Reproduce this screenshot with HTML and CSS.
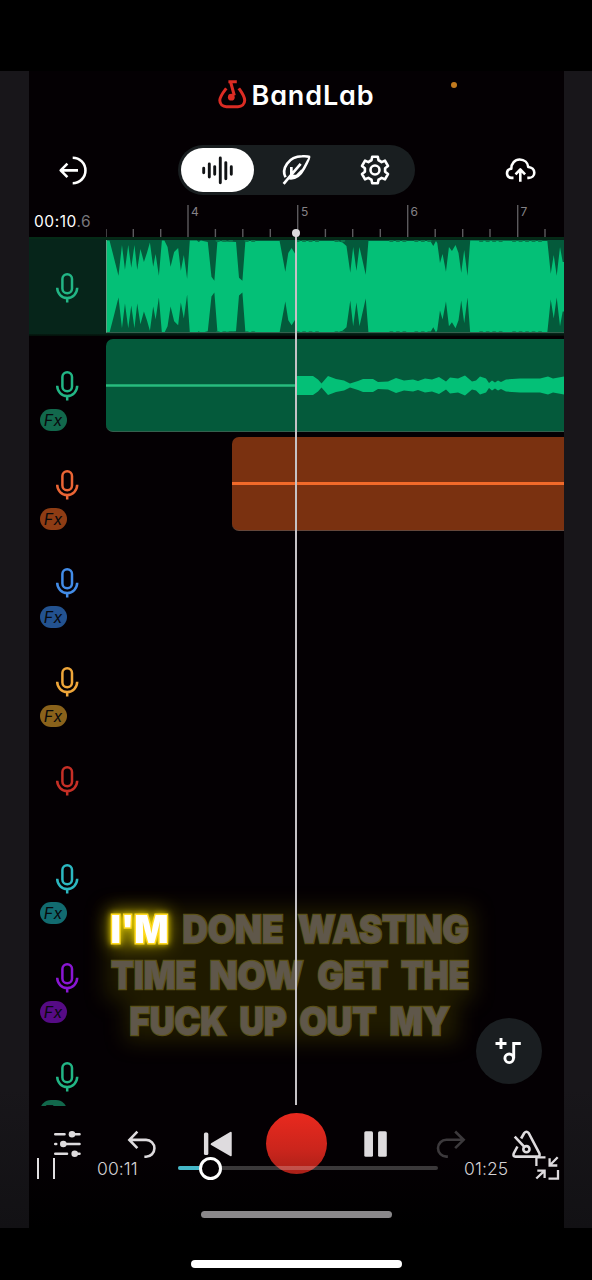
FILE: index.html
```html
<!DOCTYPE html>
<html lang="en">
<head>
<meta charset="utf-8">
<title>BandLab</title>
<link rel="stylesheet" href="styles.css">
</head>
<body>
<svg class="defs" aria-hidden="true">
  <symbol id="mic" viewBox="55 271 24 32">
    <rect x="62.4" y="273.2" width="9.6" height="19" rx="4.8"/>
    <path d="M57.2 286.8A10 10.2 0 0 0 77.2 286.8M67.2 297V301.6"/>
  </symbol>
</svg>
<div class="stage">
  <main class="app">
    <header class="brand">
      <svg class="logo" viewBox="217 78 31 31">
        <path d="M226.3 88.300C223.500 92 219.800 96.300 219.800 100.300C219.800 104.200 222.600 106.700 226.400 106.700H238C241.800 106.700 244.700 104.200 244.700 100.300C244.700 96.300 241.400 92 238.800 88.300"/>
        <path d="M228.400 81.700H236.800M230.600 82L234.300 95.500"/>
        <circle class="logo-head" cx="231.300" cy="97.200" r="3.400"/>
      </svg>
      <span class="wordmark">BandLab</span>
      <i class="mic-dot"></i>
    </header>

    <nav class="toolbar">
      <svg class="icon exit" viewBox="58 155 30 31"><path d="M72.700 157.700A12.700 12.700 0 0 1 72.700 183.200M78 170.400H60.800M67.400 163.700L60.700 170.400L67.400 177.100"/></svg>
      <div class="tabs">
        <span class="tab active"><svg viewBox="201 155 33 31"><path d="M203.700 168.300V172.700M209.300 164V177M214.700 166.600V174.200M220.300 158V182.800M225.800 162.600V178.700M231.300 166.700V174.200"/></svg></span>
        <span class="tab lyric-tab"><svg class="icon" viewBox="281 154 30 31"><path d="M284 183L289.500 176.500M285.800 176.500C281.800 168.500 288.500 156.200 302 156.200C305 156.100 308 156.200 308.800 156.700C309.300 157.200 306.300 163.300 303.600 168.200C300.500 174 296 178.300 289.500 177.500M289.500 176.500L300.500 163.500M291.500 174V166.500M290.500 175.500H296.500L302 170"/></svg></span>
        <span class="tab"><svg class="icon" viewBox="-16 -16 32 32"><path d="M-3.500 -9.700L-2.800 -13.300H2.800L3.500 -9.700Q5 -9 6.600 -7.900L9.950 -9.300L13 -4L10.100 -1.800V1.800L13 4L9.950 9.300L6.600 7.900Q5 9 3.500 9.700L2.800 13.300H-2.800L-3.500 9.700Q-5 9 -6.600 7.900L-9.950 9.300L-13 4L-10.100 1.800V-1.800L-13 -4L-9.950 -9.300L-6.600 -7.900Q-5 -9 -3.500 -9.700Z"/><circle r="4.500"/></svg></span>
      </div>
      <svg class="icon upload" viewBox="504 155 33 31"><path d="M513.500 177.900H511.500C508.800 177.600 507 175.600 507 173.300C507 170.700 508.800 169 511.300 168.800C511.300 163.300 514.800 159.500 519.700 159.500C524.500 159.500 527.800 162.800 528.300 167C531.800 167.300 534.300 169.500 534.300 172.700C534.300 175.700 532 177.900 528.800 177.900H527.300M520.300 181.700V170M515.500 174.300L520.300 169.500L525.100 174.300"/></svg>
    </nav>

    <section class="ruler">
      <span class="clock">00:10<em>.6</em></span>
      <svg class="ticks" viewBox="106 200 458 37">
        <path d="M106 229V237M133.300 229V237M160.700 229V237M188 205V237M215.400 229V237M242.800 229V237M270.300 229V237M297.700 205V237M325.400 229V237M352.700 229V237M380.300 229V237M407.700 205V237M435.200 229V237M462.700 229V237M490 229V237M517.700 205V237M545 229V237"/>
        <text x="191" y="216">4</text><text x="301" y="216">5</text><text x="410.500" y="216">6</text><text x="520.500" y="216">7</text>
      </svg>
    </section>

    <section class="tracks">
      <div class="track selected">
        <div class="head green"><svg class="mic"><use href="#mic"/></svg></div>
        <div class="clip square"><svg viewBox="106 240 458 94" preserveAspectRatio="none">
          <g class="wave">
            <path id="w1" d="M106 287.500V240.500H108.500L113 258L117.500 276L121 245L124 270L127.300 245L130.300 268L133.500 245L136.300 270L139.500 249L143 262L146 253L149 242.500L152.300 267L154.700 254L158 276L161 240.500H163.500L166.700 247L169.700 267L173.300 252L177.300 248L180 271L183 255L186.300 279L189 240.500H196L198 242L200 240.500L207 242L210.700 277L213.600 281L216.700 241L235.300 242L238.300 278L241.700 281L244.700 241H279L284.700 272L287.700 253L291 248L294.700 254L296 241H337L342 242.500L346 246L349.800 273L352.700 247L356 271L359 247L365.300 275L368 241H430L433 246L435.700 241L437 243L439.700 263L442.300 254L445.700 272L448.700 247L451.700 251L455.300 245L458.300 253L461 273L464 250L467.300 276L470 240.500L547.300 241L550.700 274L553.700 255L556.700 276L560 247L562.700 262H564V287.500Z"/>
            <use href="#w1" transform="matrix(1 0 0 -1 0 573.800)"/>
          </g>
          <path class="notches" d="M216 240.700H235M245 240.700H257M296 240.700H320M335 240.700H345M390 240.700H409M415 240.700H430M480 240.700H502M513 240.700H543M216 333H235M245 333H257M296 333H320M335 333H345M390 333H409M415 333H430M480 333H502M513 333H543"/>
        </svg></div>
      </div>
      <div class="track">
        <div class="head green"><svg class="mic"><use href="#mic"/></svg><b class="fx">Fx</b></div>
        <div class="clip"><svg viewBox="106 339 458 93.500" preserveAspectRatio="none">
          <path class="line" d="M106 385.500H297"/>
          <g class="wave">
            <path id="w2" d="M296.500 386V376H313L318 379.500L321.500 383.500L328 376L336 379L344 380.500L350 383.500L358 381L363 379L373 379L378 382L388 381.500L396 378L404 380.500L413 379.500L418 381L425 378.500L432 379.500L439 377L446 381.500L450 377.500L458 378.500L465 375.500L472 381.500L476 380.500L480 376.500L486 378.500L489 383L492 380.500L495 382.500L498 380.500L501 382L506 379.500L520 378.500H540L548 376.500L553 378.500L564 376.500V386Z"/>
            <use href="#w2" transform="matrix(1 0 0 -1 0 771)"/>
          </g>
        </svg></div>
      </div>
      <div class="track">
        <div class="head orange"><svg class="mic"><use href="#mic"/></svg><b class="fx">Fx</b></div>
        <div class="clip late"></div>
      </div>
      <div class="track"><div class="head blue"><svg class="mic"><use href="#mic"/></svg><b class="fx">Fx</b></div></div>
      <div class="track"><div class="head amber"><svg class="mic"><use href="#mic"/></svg><b class="fx">Fx</b></div></div>
      <div class="track"><div class="head red"><svg class="mic"><use href="#mic"/></svg></div></div>
      <div class="track"><div class="head cyan"><svg class="mic"><use href="#mic"/></svg><b class="fx">Fx</b></div></div>
      <div class="track"><div class="head purple"><svg class="mic"><use href="#mic"/></svg><b class="fx">Fx</b></div></div>
      <div class="track"><div class="head green"><svg class="mic"><use href="#mic"/></svg><b class="fx">Fx</b></div></div>
    </section>

    <footer class="transport">
      <svg viewBox="29 1106 76.430 74"><path class="stroke round" d="M55.300 1134.300H64.500M72 1134.300H79.500M55.300 1144H56.200M63.300 1144H79.500M55.300 1153.700H67M74.700 1153.700H79.500"/><circle cx="72" cy="1134.300" r="3.300"/><circle cx="63.300" cy="1144" r="3.300"/><circle cx="74.700" cy="1153.700" r="3.300"/></svg>
      <svg viewBox="105.430 1106 76.430 74"><path class="stroke" d="M137.800 1131.700L129.800 1139.900L137.800 1148.100M130 1139.900H146.500A8.400 8.400 0 0 1 146.500 1156.700H144.800"/></svg>
      <svg viewBox="181.860 1106 76.430 74"><rect x="203.800" y="1132.600" width="4.400" height="22.500" rx="1.500"/><path d="M211 1143.200L230 1132Q231.600 1131.300 231.600 1133V1155.200Q231.600 1157 230 1156L211 1145Q209.800 1144.100 211 1143.200Z"/></svg>
      <i class="record"></i>
      <svg viewBox="334.710 1106 76.430 74"><rect x="364" y="1131.300" width="8.700" height="25.500" rx="1.500"/><rect x="377.800" y="1131.300" width="8.700" height="25.500" rx="1.500"/></svg>
      <svg viewBox="411.140 1106 76.430 74"><path class="stroke dim" d="M455.300 1131.500L463.800 1139.800L455.300 1148.200M463.500 1139.800H446.500A8.400 8.400 0 0 0 446.500 1156.600H448"/></svg>
      <svg viewBox="487.570 1106 76.430 74"><path class="stroke" d="M520.700 1138.500L523.800 1133Q526 1130.500 528.200 1133L539 1153.500Q539.800 1156.600 537 1156.600H515Q512.300 1156.600 513.300 1153.500L517 1146.500M514.300 1136.700L523.700 1146.700"/><circle class="stroke" cx="526" cy="1149.200" r="3.100"/></svg>
    </footer>
    <i class="app-home"></i>

    <div class="fab"><svg viewBox="493 1034 33 33"><path d="M495.500 1042.500H506.500M501 1037V1048M513.700 1057.300V1042.500H520.800"/><circle cx="509.200" cy="1057.300" r="4.300"/></svg></div>

    <svg class="lyrics" viewBox="29 850 535 250">
      <path class="haze" d="M105 908H474V1000H458V1042H125V1000H105Z"/>
      <rect class="glow" x="110" y="911" width="58" height="34"/>
      <g class="words">
        <text class="sung" x="110.500" y="943" textLength="58" lengthAdjust="spacingAndGlyphs">I'M</text>
        <text x="182.500" y="943" textLength="101" lengthAdjust="spacingAndGlyphs">DONE</text>
        <text x="298" y="943" textLength="170.500" lengthAdjust="spacingAndGlyphs">WASTING</text>
        <text x="111" y="989" textLength="85" lengthAdjust="spacingAndGlyphs">TIME</text>
        <text x="209.500" y="989" textLength="94" lengthAdjust="spacingAndGlyphs">NOW</text>
        <text x="317.500" y="989" textLength="70.500" lengthAdjust="spacingAndGlyphs">GET</text>
        <text x="401" y="989" textLength="68" lengthAdjust="spacingAndGlyphs">THE</text>
        <text x="129.500" y="1035" textLength="97" lengthAdjust="spacingAndGlyphs">FUCK</text>
        <text x="239.500" y="1035" textLength="47" lengthAdjust="spacingAndGlyphs">UP</text>
        <text x="299.500" y="1035" textLength="77" lengthAdjust="spacingAndGlyphs">OUT</text>
        <text x="389.500" y="1035" textLength="60" lengthAdjust="spacingAndGlyphs">MY</text>
      </g>
    </svg>
    <i class="playhead"></i>

    <div class="player">
      <i class="pause"></i>
      <time class="elapsed">00:11</time>
      <div class="seek"><i class="played"></i><i class="knob"></i></div>
      <time class="total">01:25</time>
      <svg class="collapse" viewBox="534 1155 26 26"><path d="M536.400 1166V1157.400H545.500M557.700 1157.300L549.800 1165.200M549.600 1158.300V1165.500H557.300M536.300 1178.500L544.400 1170.900M537.300 1170.700H544.600V1178M558 1170V1178.600H548.500"/></svg>
    </div>
  </main>
</div>
<i class="device-home"></i>
</body>
</html>
```
FILE: styles.css
```css
* { box-sizing: border-box; }
body {
  margin: 0;
  width: 592px;
  height: 1280px;
  padding-top: 71px;
  overflow: hidden;
  background: #000;
  font-family: Inter, "Liberation Sans", sans-serif;
  color: #fff;
}
svg { display: block; }
.defs { position: absolute; width: 0; height: 0; }

.stage {
  height: 1157px;
  padding: 0 28px 0 29px;
  background: linear-gradient(#18161a 0 88%, #121114);
}
.app {
  position: relative;
  height: 100%;
  background: linear-gradient(#040003 0 94%, #000);
}

.brand {
  display: flex;
  align-items: center;
  height: 50px;
  padding-left: 188px;
}
.logo {
  width: 31px;
  height: 31px;
  margin-top: -5px;
  fill: none;
  stroke: #dc2c24;
  stroke-width: 3;
}
.logo .logo-head { fill: #dc2c24; stroke: none; }
.wordmark {
  width: 126px;
  margin-left: 3.500px;
  font-size: 27px;
  font-weight: 600;
  line-height: 50px;
  letter-spacing: 0.850px;
  font-feature-settings: "cv11";
}
.mic-dot {
  width: 6px;
  height: 6px;
  margin: -23px 0 0 73.500px;
  border-radius: 50%;
  background: #c27a1e;
}

.toolbar {
  display: flex;
  align-items: center;
  height: 50px;
  margin-top: 24px;
  padding: 0 27px 0 29px;
}
.icon {
  fill: none;
  stroke: #fff;
  stroke-width: 2.600;
  stroke-linejoin: round;
}
.exit { width: 30px; height: 31px; }
.upload { width: 33px; height: 31px; margin-left: auto; }
.tabs {
  display: flex;
  align-items: center;
  width: 237px;
  height: 50px;
  margin-left: 90px;
  padding: 0 3px;
  border-radius: 25px;
  background: #191e20;
}
.tab {
  display: flex;
  align-items: center;
  justify-content: center;
  width: 75px;
  height: 44px;
}
.tab svg { flex: none; width: 32px; height: 32px; }
.lyric-tab { width: 83px; }
.tab.active {
  width: 73.500px;
  border-radius: 22px;
  background: #fff;
}
.tab.active svg { width: 33px; height: 31px; fill: none; stroke: #101214; stroke-width: 2.900; stroke-linecap: round; }

.ruler { display: flex; height: 42px; }
.clock {
  width: 77px;
  padding: 17px 0 0 5px;
  font-size: 15.500px;
  line-height: 19px;
  letter-spacing: 0.550px;
  white-space: nowrap;
}
.clock em { font-style: normal; color: #77767a; }
.ticks { width: 458px; height: 37px; margin-top: 5px; }
.ticks path { stroke: #5c5a5e; stroke-width: 1.400; }
.ticks text { font-size: 12px; fill: #848286; }

.tracks { height: 869px; overflow: hidden; }
.track { display: flex; height: 98.650px; }
.selected { background: linear-gradient(#052b17 0 2px, #06251a 2px 96.500px, #04120b 98px); }
.head {
  --tone: #22b585;
  width: 77px;
  padding: 34.500px 0 0 10.500px;
}
.mic {
  width: 24px;
  height: 32px;
  margin-left: 15.500px;
  fill: none;
  stroke: var(--tone);
  stroke-width: 2.500;
}
.fx {
  display: block;
  width: 27.500px;
  height: 22px;
  margin-top: 7px;
  border-radius: 11px;
  background: var(--pill, #12684c);
  color: #08090c;
  font-size: 16px;
  font-style: italic;
  font-weight: 400;
  line-height: 22px;
  text-align: center;
  letter-spacing: 0.500px;
}
.orange { --tone: #eb6535; --pill: #8e3c14; }
.blue { --tone: #438ce8; --pill: #235290; }
.amber { --tone: #efa63a; --pill: #8a621b; }
.red { --tone: #c62f26; }
.cyan { --tone: #2cb8c1; --pill: #126b70; }
.purple { --tone: #8a16d4; --pill: #560b85; }

.clip {
  width: 458px;
  height: 93.500px;
  margin-top: 3px;
  overflow: hidden;
  border-bottom: 1px solid #35604e;
  border-radius: 7px 0 0 7px;
  background: #045a3b;
}
.clip svg { width: 100%; height: 93.500px; }
.clip.square { margin-top: 2.500px; border-radius: 0; border-left: 1px solid #62a385; }
.clip.late {
  width: 332.500px;
  margin: 3.200px 0 0 125.500px;
  border-bottom-color: #64463a;
  background: linear-gradient(#7a3110 45.500px, #f26a2a 45.500px 48px, #7a3110 48px);
}
.wave { fill: #04c077; }
.line { stroke: #27bc7e; stroke-width: 2.400; }
.notches {
  fill: none;
  stroke: #087a4c;
  stroke-width: 2.500;
  stroke-linecap: round;
  stroke-dasharray: 2 4.500;
}

.transport {
  display: grid;
  grid-template-columns: repeat(7, 1fr);
  justify-items: center;
  height: 74px;
}
.transport svg { width: 76.430px; height: 74px; fill: #dedbde; }
.transport .stroke { fill: none; stroke: #dedbde; stroke-width: 2.600; }
.transport .round { stroke-linecap: round; }
.transport .dim { stroke: #3c393c; }
.record {
  width: 61px;
  height: 61px;
  margin-top: 7px;
  border-radius: 50%;
  background: linear-gradient(#e9291e, #cb251c 60%, #a92018);
}
.app-home {
  display: block;
  width: 191px;
  height: 7px;
  margin: 31px 0 0 172px;
  border-radius: 4px;
  background: #8a888a;
}
.device-home {
  display: block;
  width: 211px;
  height: 8px;
  margin: 32px 0 0 191px;
  border-radius: 4px;
  background: #fff;
}

.fab {
  position: absolute;
  left: 447px;
  top: 947px;
  display: flex;
  align-items: center;
  justify-content: center;
  width: 66px;
  height: 66px;
  border-radius: 50%;
  background: #1a1e21;
}
.fab svg { width: 33px; height: 33px; fill: none; stroke: #fff; stroke-width: 2.900; }

.playhead {
  position: absolute;
  left: 266.300px;
  top: 163px;
  width: 2px;
  height: 871px;
  background: #c5c2c5;
}
.playhead::before {
  content: "";
  position: absolute;
  left: -3px;
  top: -5px;
  width: 8px;
  height: 8px;
  border-radius: 50%;
  background: #dcdadc;
}

.lyrics {
  position: absolute;
  left: 0;
  top: 779px;
  width: 535px;
  height: 250px;
  overflow: visible;
  font-size: 38px;
  font-weight: 900;
}
.glow { fill: #d8c400; filter: blur(9px); opacity: 0.600; }
.haze { fill: #241f00; filter: blur(10px); opacity: 0.850; }
.words text {
  fill: #5f574a;
  stroke: #5a5119;
  stroke-width: 2.400;
  paint-order: stroke;
}
.words text.sung { fill: #fff; stroke: #ffd91f; stroke-width: 3; filter: drop-shadow(0 0 3px #e8d000); }

.player {
  position: absolute;
  left: 0;
  top: 1084px;
  display: flex;
  align-items: center;
  width: 535px;
  height: 26px;
  padding-left: 8px;
}
.pause { width: 17.500px; height: 21px; border: solid #e2e0e2; border-width: 0 2px; }
.player time {
  font-size: 17.500px;
  font-weight: 300;
  color: #d4d2d4;
  letter-spacing: 0.100px;
}
.elapsed { width: 81px; margin-left: 42.500px; }
.total { width: 46px; margin-left: 26px; }
.seek {
  display: flex;
  align-items: center;
  width: 260px;
  height: 3.500px;
  border-radius: 2px;
  background: rgba(255, 255, 255, 0.220);
}
.played { width: 20.500px; height: 3.500px; border-radius: 2px 0 0 2px; background: #45b7c8; }
.knob {
  flex: none;
  width: 23px;
  height: 23px;
  border: 3px solid #fff;
  border-radius: 50%;
  background: #040003;
}
.collapse {
  width: 26px;
  height: 26px;
  margin-left: 23.500px;
  fill: none;
  stroke: #dedbde;
  stroke-width: 2.300;
}
```
